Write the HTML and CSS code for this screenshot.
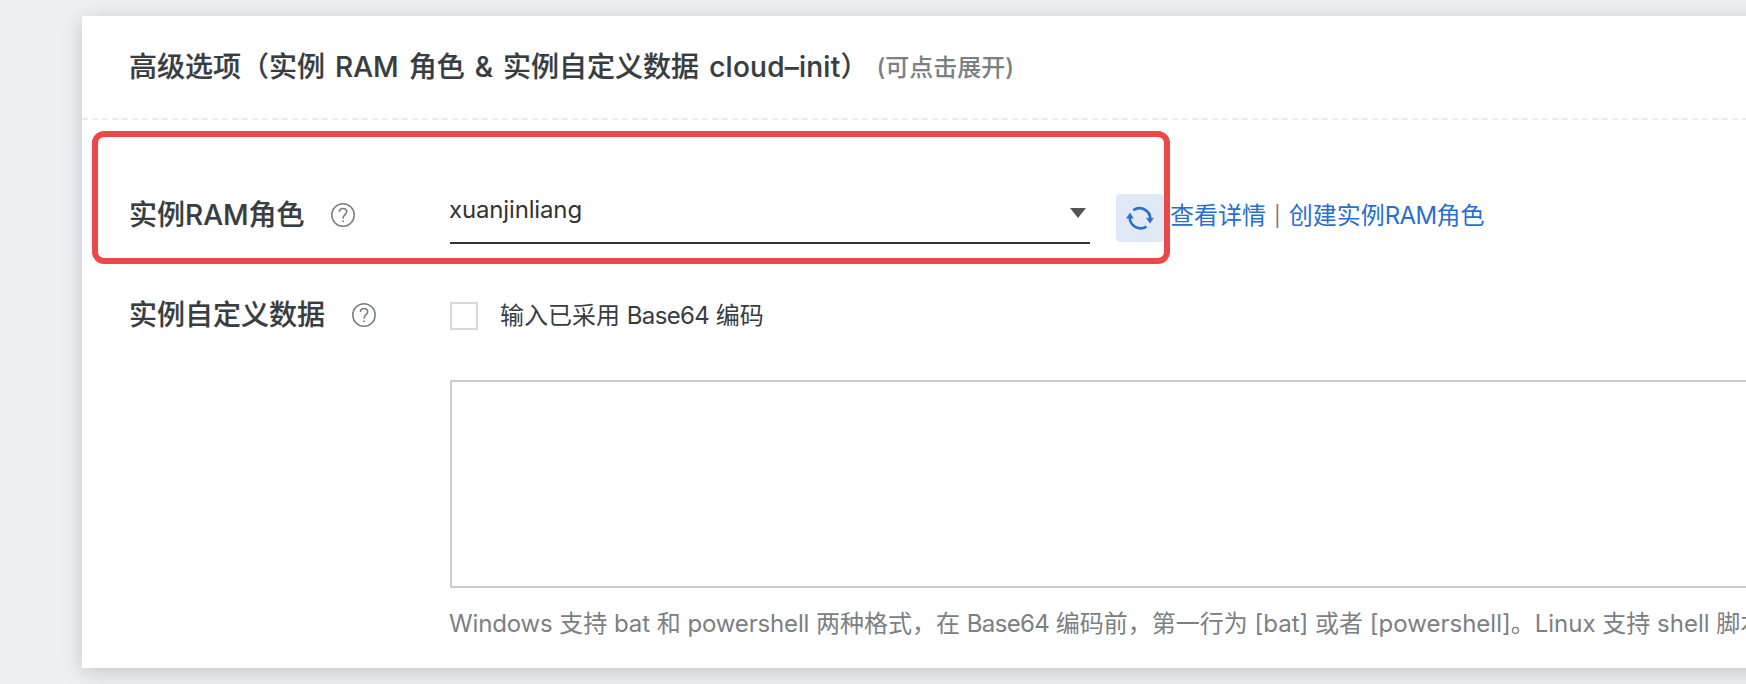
FILE: index.html
```html
<!DOCTYPE html>
<html lang="zh-CN">
<head>
<meta charset="utf-8">
<title>高级选项</title>
<link rel="stylesheet" href="styles.css">
</head>
<body>
<main class="card">
  <header class="card-header">
    <h1 class="title">高级选项（实例 RAM 角色 &amp; 实例自定义数据 <span class="cloud">cloud–init</span>）</h1>
    <span class="subtitle">(可点击展开)</span>
  </header>
  <section class="row row-role">
    <div class="label"><span>实例RAM角色</span>
      <svg class="help" viewBox="0 0 24 24"><circle cx="12" cy="12" r="11.2"/><path d="M8.4 9.1C8.4 6.8 9.9 5.4 12 5.4s3.7 1.4 3.7 3.4c0 2.6-3.6 3.2-3.6 6.3v.6"/><path d="M11.2 18.3h1.7"/></svg>
    </div>
    <div class="select"><span class="value">xuanjinliang</span>
      <svg class="caret" viewBox="0 0 16 10"><path d="M0 0h16L8 10z"/></svg>
    </div>
    <button class="refresh" aria-label="刷新">
      <svg viewBox="0 0 48 48"><path d="M17.2 16.2A11 11 0 0 1 34.4 25"/><path d="M30.5 32.6A11 11 0 0 1 13.7 23"/><path class="tip" d="M30.5 24.2h6.8L34 29.2zM10.5 24.2h6.8L14 19z"/></svg>
    </button>
    <div class="links"><a>查看详情</a><span class="bar">|</span><a>创建实例<span class="ram">RAM</span>角色</a></div>
    <div class="highlight"></div>
  </section>
  <section class="row row-data">
    <div class="label"><span>实例自定义数据</span>
      <svg class="help" viewBox="0 0 24 24"><circle cx="12" cy="12" r="11.2"/><path d="M8.4 9.1C8.4 6.8 9.9 5.4 12 5.4s3.7 1.4 3.7 3.4c0 2.6-3.6 3.2-3.6 6.3v.6"/><path d="M11.2 18.3h1.7"/></svg>
    </div>
    <label class="check"><span class="box"></span><span class="check-text">输入已采用 <span class="base">Base64</span> 编码</span></label>
  </section>
  <section class="editor">
    <div class="textarea"></div>
    <p class="hint"><span class="latin">Windows</span> 支持 <span class="latin">bat</span> 和 <span class="latin">powershell</span> 两种格式，在 <span class="base">Base64</span> 编码前，第一行为 [bat] 或者 [powershell]。Linux 支持 shell 脚本</p>
  </section>
</main>
</body>
</html>
```
FILE: styles.css
```css
* { box-sizing: border-box; }
body {
  margin: 0;
  height: 684px;
  padding: 16px 0 16px 82px;
  overflow: hidden;
  background: #eff0f4;
  color: #373d41;
  font: 24px/36px Inter, "Noto Sans CJK SC", sans-serif;
  white-space: nowrap;
}
.card {
  width: 1704px;
  height: 652px;
  background: #fff;
  box-shadow: 0 4px 20px rgba(0, 0, 0, .18);
}
.card-header {
  height: 104px;
  padding: 0 0 2px 47px;
  display: flex;
  align-items: center;
  background: repeating-linear-gradient(90deg, #ebebeb 0 6px, transparent 6px 10px) 0 100% / 100% 2px no-repeat;
}
.title {
  margin: 0;
  font-size: 28px;
  line-height: 40px;
  font-weight: 500;
  word-spacing: 2.6px;
  -webkit-text-stroke: .2px currentColor;
}
.cloud { letter-spacing: .25px; }
.subtitle {
  margin: 2px 0 0 8px;
  color: #7b8082;
  font-weight: 500;
}
.row {
  position: relative;
  display: flex;
  padding-left: 47px;
}
.row-role { height: 156px; padding-top: 66px; }
.label {
  width: 321px;
  height: 58px;
  display: flex;
  align-items: center;
  gap: 26.5px;
  font-size: 28px;
  font-weight: 500;
  -webkit-text-stroke: .2px currentColor;
}
.help {
  width: 24px;
  height: 24px;
  fill: none;
  stroke: #777c7f;
  stroke-width: 1.5;
}
.select {
  width: 640px;
  height: 58px;
  padding: 6px 4px 0 0;
  display: flex;
  justify-content: space-between;
  border-bottom: 2px solid #333;
  color: #333;
}
.value { margin-left: -1px; letter-spacing: -.15px; }
.caret { width: 16px; height: 10px; margin-top: 16px; fill: #555; }
.refresh {
  width: 48px;
  height: 48px;
  margin: 8px 0 0 26px;
  padding: 0;
  border: 0;
  border-radius: 4px;
  background: #e0e9f5;
}
.refresh svg { display: block; width: 48px; height: 48px; fill: none; stroke: #2970cc; stroke-width: 2.6; }
.refresh .tip { fill: #2970cc; stroke-width: .5; }
.links { display: flex; margin: 12px 0 0 6px; color: #2970cc; }
.ram { letter-spacing: -.6px; }
.bar { margin: 0 8px; color: #777; font-size: 20px; }
.highlight {
  position: absolute;
  left: 10px;
  top: 10.5px;
  width: 1078px;
  height: 133px;
  border: 6px solid #ed4848;
  border-radius: 12px;
}
.row-data { height: 104px; padding-top: 10px; }
.check { display: flex; align-items: center; height: 60px; }
.box { width: 28px; height: 28px; border: 2px solid #d9d9d9; }
.check-text { margin-left: 22px; }
.base { letter-spacing: -.65px; }
.latin { letter-spacing: -.15px; }
.editor { padding-left: 368px; }
.textarea { height: 208px; border: 2px solid #ccc; }
.hint { margin: 18px 0 0 -1px; color: #7b8082; word-spacing: 0; }
```
